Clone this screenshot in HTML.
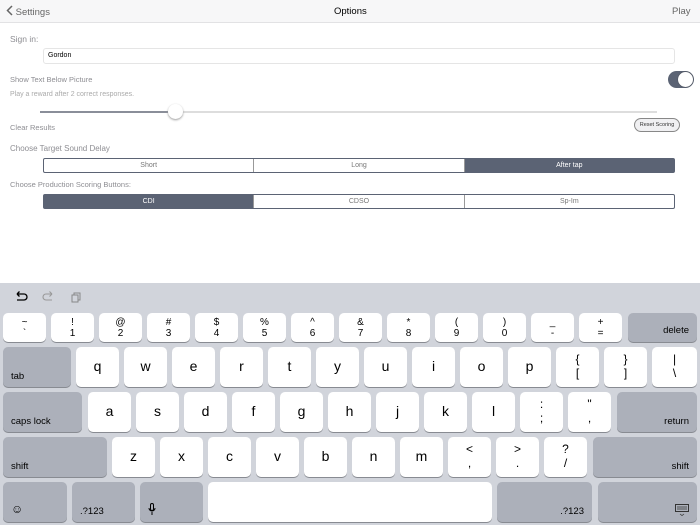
<!DOCTYPE html>
<html><head><meta charset="utf-8"><style>
*{margin:0;padding:0;box-sizing:border-box}
body{width:700px;height:525px;overflow:hidden;background:#fff;font-family:"Liberation Sans",sans-serif;position:relative}
.a{position:absolute}
.nav{left:0;top:0;width:700px;height:23px;background:#f7f7f8;border-bottom:1px solid #e2e2e4}
.lbl{color:#8e8e93;font-size:8.5px}
.seg{position:absolute;height:15px;border:1px solid #5b6374;border-radius:2px;display:flex;background:#fff}
.seg div{flex:1;font-size:7px;color:#777;text-align:center;line-height:13px;border-right:1px solid #999}
.seg div:last-child{border-right:none}
.seg .on{background:#5b6374;color:#fff}
.kb{left:0;top:283px;width:700px;height:242px;background:#d1d4db}
.k{position:absolute;background:#fff;border-radius:5px;box-shadow:0 1px 0 #888b92;color:#000;text-align:center;font-size:14px}
.g{background:#acb0ba}
.r1{top:313px;height:29px;font-size:10px;line-height:11px;padding-top:4px}
.r{height:40px;line-height:38px}
.g.t{font-size:9.5px;text-align:left;padding-left:8px;line-height:12px;padding-top:24px}
.g.tr{font-size:9.5px;text-align:right;padding-right:8px;line-height:12px;padding-top:24px}
.two{font-size:12px;line-height:14px;padding-top:5px}
</style></head><body>
<div class="a nav"></div>
<div class="a" style="left:6px;top:5px;font-size:9.5px;color:#666"><svg width="7" height="11" viewBox="0 0 7 11" style="vertical-align:-1px"><path d="M6 1L1.5 5.5L6 10" stroke="#666" stroke-width="1.5" fill="none"/></svg> Settings</div>
<div class="a" style="left:334px;top:6px;font-size:9.5px;color:#000">Options</div>
<div class="a" style="left:672px;top:6px;font-size:9.5px;color:#666">Play</div>
<div class="a lbl" style="left:10px;top:34px">Sign in:</div>
<div class="a" style="left:43px;top:48px;width:632px;height:16px;border:1px solid #e5e5e5;border-radius:3px;font-size:7px;line-height:14px;padding-left:4px">Gordon</div>
<div class="a lbl" style="left:10px;top:75px;font-size:7.5px">Show Text Below Picture</div>
<div class="a" style="left:668px;top:71px;width:26px;height:17px;border-radius:9px;background:#5b6374"></div>
<div class="a" style="left:678px;top:72px;width:15px;height:15px;border-radius:8px;background:#fff;box-shadow:0 0 1px #333"></div>
<div class="a lbl" style="left:10px;top:91px;font-size:7px;color:#aaa">Play a reward after 2 correct responses.</div>
<div class="a" style="left:40px;top:111px;width:135px;height:2px;background:#8a8e99"></div>
<div class="a" style="left:175px;top:111px;width:482px;height:2px;background:#ddd"></div>
<div class="a" style="left:168px;top:104px;width:15px;height:15px;border-radius:8px;background:#fff;box-shadow:0 1px 2px #999"></div>
<div class="a lbl" style="left:10px;top:123px;font-size:7.5px">Clear Results</div>
<div class="a" style="left:634px;top:118px;width:46px;height:14px;border:1px solid #888;border-radius:8px;background:#f0f0f2;font-size:5.5px;line-height:12px;text-align:center;color:#333">Reset Scoring</div>
<div class="a lbl" style="left:10px;top:144px;font-size:8px">Choose Target Sound Delay</div>
<div class="seg" style="left:43px;top:158px;width:632px"><div>Short</div><div>Long</div><div class="on">After tap</div></div>
<div class="a lbl" style="left:10px;top:180px;font-size:7.5px">Choose Production Scoring Buttons:</div>
<div class="seg" style="left:43px;top:194px;width:632px"><div class="on">CDI</div><div>CDSO</div><div>Sp-Im</div></div>

<div class="a kb"></div>
<svg class="a" style="left:14px;top:291px" width="70" height="12"><path d="M3 3h7a3 3 0 0 1 0 6H3M3 3l2.5-2.5M3 3l2.5 2.5" stroke="#000" stroke-width="1.3" fill="none"/><path d="M38 3h-6a3 3 0 0 0 0 6h6M38 3l-2.5-2.5M38 3l-2.5 2.5" stroke="#999" stroke-width="1.1" fill="none"/><rect x="58" y="4" width="6" height="7" stroke="#888" fill="none"/><path d="M60 4V2h6v7h-2" stroke="#888" fill="none"/></svg>

<div class="k r1" style="left:3px;width:43px">~<br>`</div>
<div class="k r1" style="left:51px;width:43px">!<br>1</div>
<div class="k r1" style="left:99px;width:43px">@<br>2</div>
<div class="k r1" style="left:147px;width:43px">#<br>3</div>
<div class="k r1" style="left:195px;width:43px">$<br>4</div>
<div class="k r1" style="left:243px;width:43px">%<br>5</div>
<div class="k r1" style="left:291px;width:43px">^<br>6</div>
<div class="k r1" style="left:339px;width:43px">&amp;<br>7</div>
<div class="k r1" style="left:387px;width:43px">*<br>8</div>
<div class="k r1" style="left:435px;width:43px">(<br>9</div>
<div class="k r1" style="left:483px;width:43px">)<br>0</div>
<div class="k r1" style="left:531px;width:43px">_<br>-</div>
<div class="k r1" style="left:579px;width:43px">+<br>=</div>
<div class="k g r1 tr" style="left:628px;width:69px;padding-top:12px;top:313px">delete</div>

<div class="k g t" style="left:3px;top:347px;width:68px;height:40px">tab</div>
<div class="k r" style="left:76px;top:347px;width:43px">q</div>
<div class="k r" style="left:124px;top:347px;width:43px">w</div>
<div class="k r" style="left:172px;top:347px;width:43px">e</div>
<div class="k r" style="left:220px;top:347px;width:43px">r</div>
<div class="k r" style="left:268px;top:347px;width:43px">t</div>
<div class="k r" style="left:316px;top:347px;width:43px">y</div>
<div class="k r" style="left:364px;top:347px;width:43px">u</div>
<div class="k r" style="left:412px;top:347px;width:43px">i</div>
<div class="k r" style="left:460px;top:347px;width:43px">o</div>
<div class="k r" style="left:508px;top:347px;width:43px">p</div>
<div class="k r two" style="left:556px;top:347px;width:43px">{<br>[</div>
<div class="k r two" style="left:604px;top:347px;width:43px">}<br>]</div>
<div class="k r two" style="left:652px;top:347px;width:45px">|<br>\</div>

<div class="k g t" style="left:3px;top:392px;width:79px;height:40px">caps lock</div>
<div class="k r" style="left:88px;top:392px;width:43px">a</div>
<div class="k r" style="left:136px;top:392px;width:43px">s</div>
<div class="k r" style="left:184px;top:392px;width:43px">d</div>
<div class="k r" style="left:232px;top:392px;width:43px">f</div>
<div class="k r" style="left:280px;top:392px;width:43px">g</div>
<div class="k r" style="left:328px;top:392px;width:43px">h</div>
<div class="k r" style="left:376px;top:392px;width:43px">j</div>
<div class="k r" style="left:424px;top:392px;width:43px">k</div>
<div class="k r" style="left:472px;top:392px;width:43px">l</div>
<div class="k r two" style="left:520px;top:392px;width:43px">:<br>;</div>
<div class="k r two" style="left:568px;top:392px;width:43px">"<br>,</div>
<div class="k g tr" style="left:617px;top:392px;width:80px;height:40px">return</div>

<div class="k g t" style="left:3px;top:437px;width:104px;height:40px">shift</div>
<div class="k r" style="left:112px;top:437px;width:43px">z</div>
<div class="k r" style="left:160px;top:437px;width:43px">x</div>
<div class="k r" style="left:208px;top:437px;width:43px">c</div>
<div class="k r" style="left:256px;top:437px;width:43px">v</div>
<div class="k r" style="left:304px;top:437px;width:43px">b</div>
<div class="k r" style="left:352px;top:437px;width:43px">n</div>
<div class="k r" style="left:400px;top:437px;width:43px">m</div>
<div class="k r two" style="left:448px;top:437px;width:43px">&lt;<br>,</div>
<div class="k r two" style="left:496px;top:437px;width:43px">&gt;<br>.</div>
<div class="k r two" style="left:544px;top:437px;width:43px">?<br>/</div>
<div class="k g tr" style="left:593px;top:437px;width:104px;height:40px">shift</div>

<div class="k g t" style="left:3px;top:482px;width:64px;height:40px;font-size:12px;padding-top:21px">☺</div>
<div class="k g t" style="left:72px;top:482px;width:63px;height:40px">.?123</div>
<div class="k g t" style="left:140px;top:482px;width:63px;height:40px;padding-top:21px"><svg width="8" height="12"><rect x="2.5" y="0.5" width="3" height="7" rx="1.5" stroke="#000" fill="none"/><path d="M1 5a3 3 0 0 0 6 0M4 9v3" stroke="#000" fill="none"/></svg></div>
<div class="k" style="left:208px;top:482px;width:284px;height:40px"></div>
<div class="k g tr" style="left:497px;top:482px;width:95px;height:40px">.?123</div>
<div class="k g tr" style="left:598px;top:482px;width:99px;height:40px;padding-top:22px"><svg width="14" height="12"><rect x="0.5" y="0.5" width="13" height="7" stroke="#333" fill="none"/><path d="M2 3h10M2 5h10M5 10l2 1.5 2-1.5" stroke="#333" stroke-width="0.7" fill="none"/></svg></div>
</body></html>
